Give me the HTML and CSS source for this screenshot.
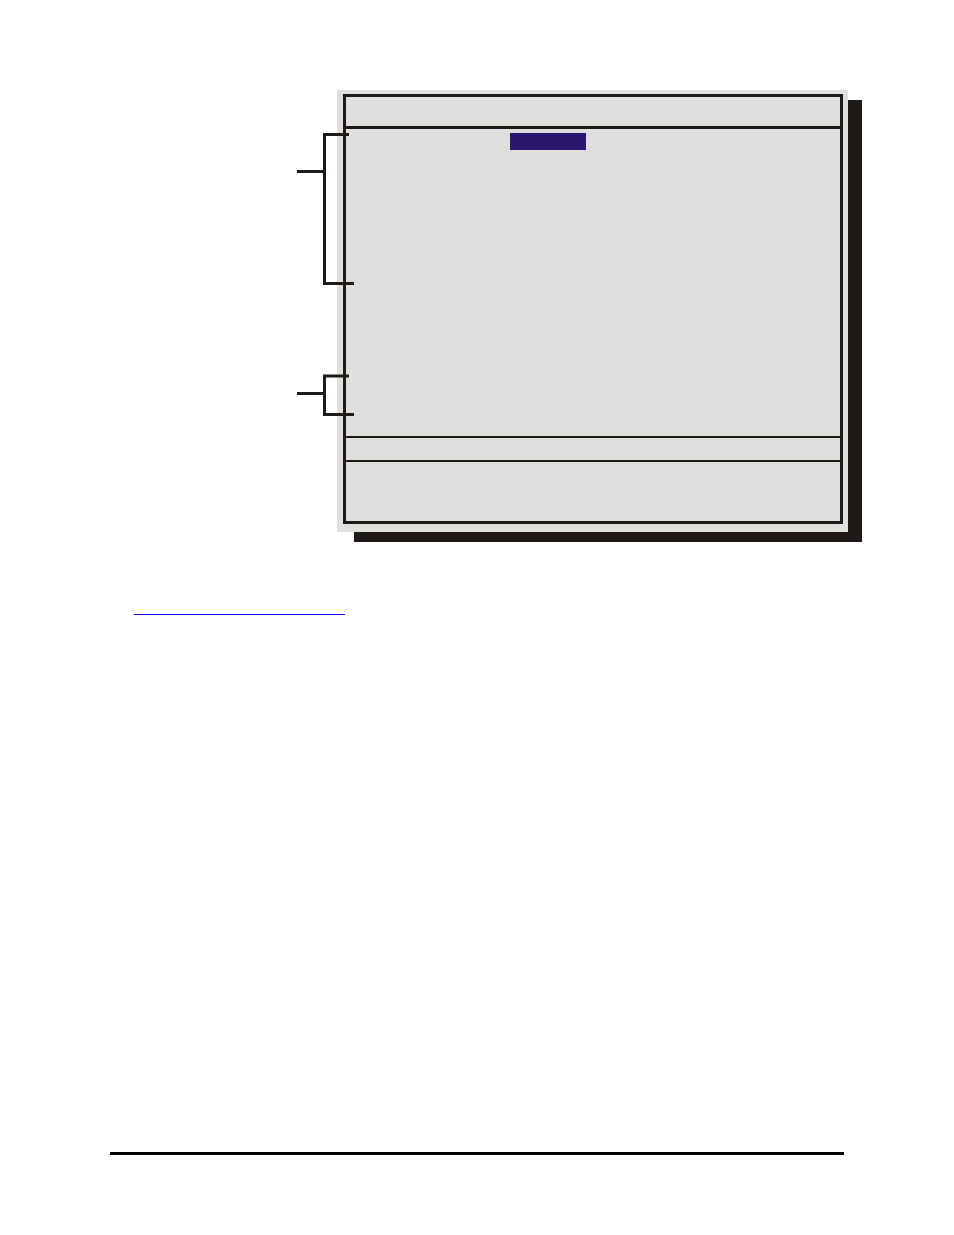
FILE: index.html
```html
<!DOCTYPE html>
<html lang="en">
<head>
    <meta charset="UTF-8">
    <meta name="viewport" content="width=device-width, initial-scale=1.0">
    <title>Setup Screen</title>
    <link rel="stylesheet" href="styles.css">
</head>
<body>
    <main class="page">
        <figure class="diagram">
            <!-- callout brackets, the arms reach over the screen edge -->
            <svg class="brackets" width="40" height="442" viewBox="0 0 40 442" aria-hidden="true">
                <path d="M0 81.5H27M52 44.5H27.5V193.5H57"/>
                <path d="M0 303.5H27M52 286H27.5V324.5H57"/>
            </svg>
            <div class="screen">
                <div class="screen-frame">
                    <div class="screen-title"></div>
                    <div class="screen-body">
                        <div class="selected"></div>
                    </div>
                    <div class="screen-status"></div>
                    <div class="screen-help"></div>
                </div>
            </div>
        </figure>

        <a class="reference-link" href="#"></a>

        <footer class="page-footer"></footer>
    </main>
</body>
</html>
```

FILE: styles.css
```css
* {
    box-sizing: border-box;
}
body {
    margin: 0;
    background: white;
    font-family: "Liberation Sans", Arial, sans-serif;
}
.page {
    display: flex;
    flex-direction: column;
    min-height: 100vh;
    padding: 90px 110px 80px;
}
.diagram {
    display: flex;
    margin: 0 -4px 0 187px;
}
.brackets {
    flex: none;
    z-index: 1;
    overflow: visible;
    fill: none;
    stroke: #1f1a17;
    stroke-width: 3;
}
.screen {
    position: relative;
    flex: 1;
    padding: 4px 5px 8px 6px;
    background: #dfdfdd;
}
/* hard shadow behind the screen */
.screen::before {
    content: "";
    position: absolute;
    z-index: -1;
    top: 10px;
    right: -14px;
    bottom: -10px;
    left: 17px;
    background: #1f1a17;
}
.screen-frame {
    border: 3px solid #1f1a17;
}
.screen-title {
    height: 32px;
    border-bottom: 3px solid #1f1a17;
}
.screen-body {
    height: 307px;
    padding: 4px 0 0 164px;
}
.selected {
    width: 76px;
    height: 17px;
    background: #29166f;
}
.screen-status {
    height: 26px;
    border-top: 2px solid #1f1a17;
    border-bottom: 2px solid #1f1a17;
}
.screen-help {
    height: 59px;
}
.reference-link {
    width: 211px;
    height: 20px;
    margin: 63px 0 0 24px;
    border-bottom: 1px solid #0000ff;
}
.page-footer {
    margin-top: auto;
    border-top: 3px solid black;
}
```
